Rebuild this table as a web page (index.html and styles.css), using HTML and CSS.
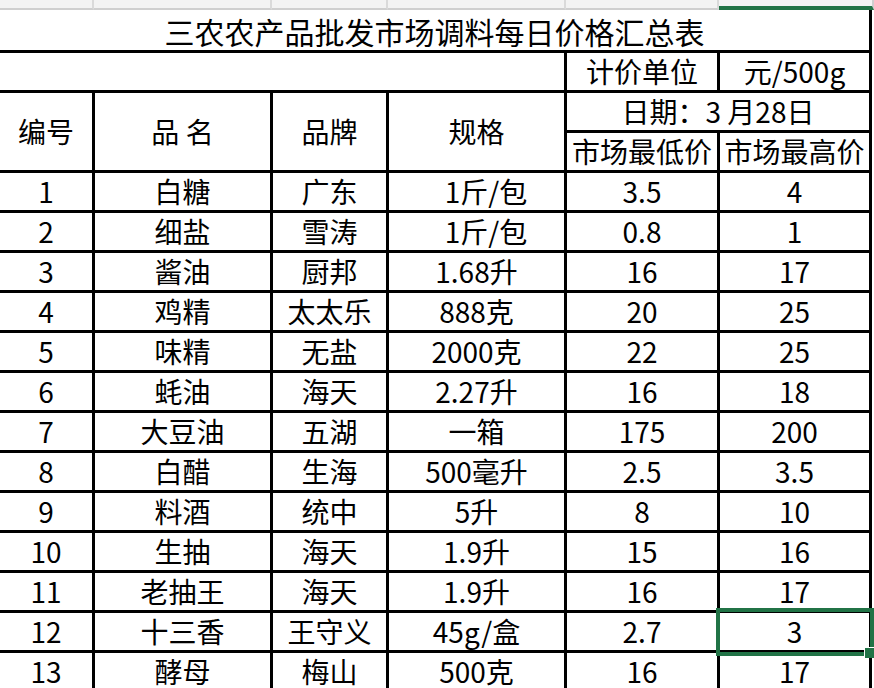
FILE: index.html
```html
<!DOCTYPE html>
<html lang="zh-CN">
<head>
<meta charset="utf-8">
<title>三农农产品批发市场调料每日价格汇总表</title>
<link rel="stylesheet" href="styles.css">
</head>
<body>
<div class="colhead">
  <span class="ch w1"></span><span class="ch w2"></span><span class="ch w3"></span><span class="ch w4"></span><span class="ch w5"></span><span class="ch w6 active"></span>
</div>
<div class="sheet">
  <div class="c title">三农农产品批发市场调料每日价格汇总表</div>

  <div class="c span4"></div>
  <div class="c">计价单位</div>
  <div class="c">元/500g</div>

  <div class="c rs2">编号</div>
  <div class="c rs2">品 名</div>
  <div class="c rs2">品牌</div>
  <div class="c rs2">规格</div>
  <div class="c cs2">日期：3 月28日</div>
  <div class="c">市场最低价</div>
  <div class="c">市场最高价</div>

  <div class="c">1</div><div class="c">白糖</div><div class="c">广东</div><div class="c">   1斤/包</div><div class="c">3.5</div><div class="c">4</div>
  <div class="c">2</div><div class="c">细盐</div><div class="c">雪涛</div><div class="c">   1斤/包</div><div class="c">0.8</div><div class="c">1</div>
  <div class="c">3</div><div class="c">酱油</div><div class="c">厨邦</div><div class="c">1.68升</div><div class="c">16</div><div class="c">17</div>
  <div class="c">4</div><div class="c">鸡精</div><div class="c">太太乐</div><div class="c">888克</div><div class="c">20</div><div class="c">25</div>
  <div class="c">5</div><div class="c">味精</div><div class="c">无盐</div><div class="c">2000克</div><div class="c">22</div><div class="c">25</div>
  <div class="c">6</div><div class="c">蚝油</div><div class="c">海天</div><div class="c">2.27升</div><div class="c">16</div><div class="c">18</div>
  <div class="c">7</div><div class="c">大豆油</div><div class="c">五湖</div><div class="c">一箱</div><div class="c">175</div><div class="c">200</div>
  <div class="c">8</div><div class="c">白醋</div><div class="c">生海</div><div class="c">500毫升</div><div class="c">2.5</div><div class="c">3.5</div>
  <div class="c">9</div><div class="c">料酒</div><div class="c">统中</div><div class="c">5升</div><div class="c">8</div><div class="c">10</div>
  <div class="c">10</div><div class="c">生抽</div><div class="c">海天</div><div class="c">1.9升</div><div class="c">15</div><div class="c">16</div>
  <div class="c">11</div><div class="c">老抽王</div><div class="c">海天</div><div class="c">1.9升</div><div class="c">16</div><div class="c">17</div>
  <div class="c">12</div><div class="c">十三香</div><div class="c">王守义</div><div class="c">45g/盒</div><div class="c">2.7</div><div class="c">3</div>
  <div class="c">13</div><div class="c">酵母</div><div class="c">梅山</div><div class="c">500克</div><div class="c">16</div><div class="c">17</div>
</div>
<div class="selection"></div>
<div class="handle"></div>
</body>
</html>
```
FILE: styles.css
```css
html, body {
  margin: 0;
  padding: 0;
  overflow: hidden;
  background: #ffffff;
}

body {
  font-family: "Noto Sans CJK SC", "Noto Sans", sans-serif;
  color: #000000;
  width: 874px;
  height: 688px;
  position: relative;
}

.colhead {
  display: flex;
  height: 10px;
  background: #f3f3f3;
}

.ch {
  box-sizing: border-box;
  height: 10px;
  border-right: 2px solid #dadada;
  border-bottom: 2px solid #cfcfcf;
}

.w1 { width: 94px; }
.w2 { width: 178px; }
.w3 { width: 116px; }
.w4 { width: 178px; }
.w5 { width: 153px; }
.w6 { width: 155px; }

.ch.active {
  border-bottom: 4px solid #217346;
  border-right: 2px solid #cfcfcf;
}

.sheet {
  display: grid;
  grid-template-columns: 95px 178px 116px 178px 153px 152px;
  grid-template-rows: 43px;
  grid-auto-rows: 40px;
  width: 872px;
}

.c {
  box-sizing: border-box;
  border-right: 3px solid #000000;
  border-bottom: 3px solid #000000;
  display: flex;
  align-items: center;
  justify-content: center;
  font-size: 28px;
  line-height: 1;
  white-space: pre;
  padding-bottom: 1px;
}

.title {
  grid-column: 1 / -1;
  font-size: 30px;
  padding-top: 2px;
}

.span4 { grid-column: span 4; }
.rs2 { grid-row: span 2; }
.cs2 { grid-column: span 2; }

.selection {
  position: absolute;
  left: 716px;
  top: 608px;
  width: 158px;
  height: 48px;
  box-sizing: border-box;
  border: 4px solid #217346;
}

.handle {
  position: absolute;
  left: 864px;
  top: 647px;
  width: 10px;
  height: 11px;
  box-sizing: border-box;
  background: #217346;
  border-left: 1px solid #ffffff;
  border-top: 1px solid #ffffff;
}
```
